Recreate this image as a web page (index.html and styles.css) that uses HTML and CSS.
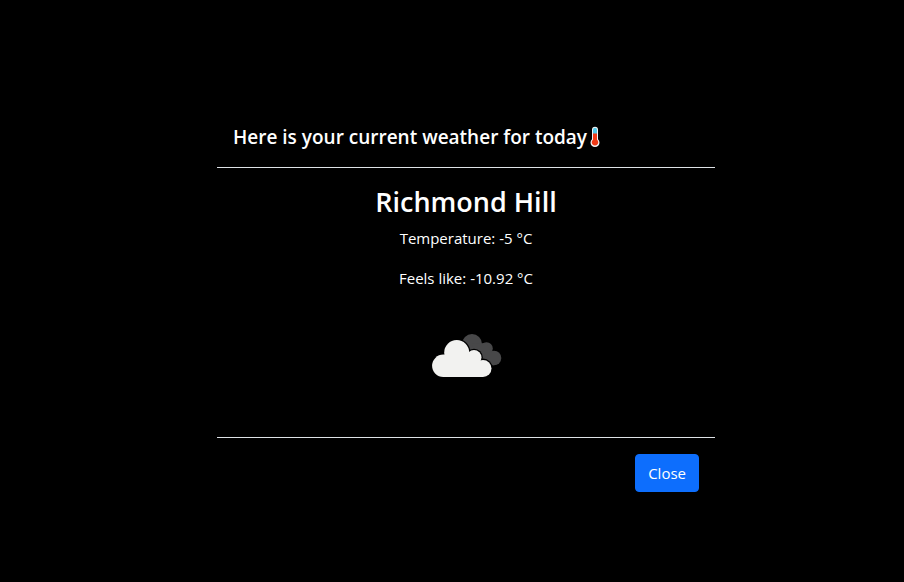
FILE: index.html
```html
<!DOCTYPE html>
<html lang="en">
<head>
<meta charset="utf-8">
<meta name="viewport" content="width=device-width, initial-scale=1">
<title>Current weather</title>
<link rel="stylesheet" href="styles.css">
</head>
<body>
<section class="modal" role="dialog" aria-labelledby="modal-title">
  <header class="modal-header">
    <h1 class="modal-title" id="modal-title">Here is your current weather for today</h1>
    <svg class="thermometer" viewBox="0 0 12 22" aria-hidden="true">
      <path d="M6 .8a3 3 0 0 0-3 3v9.400a4.500 4.500 0 1 0 6 0V3.800a3 3 0 0 0-3-3z" fill="#f4f4f4"/>
      <path d="M4 3.800a2 2 0 0 1 4 0V8H4z" fill="#50c8e8"/>
      <path d="M4 7.500h4v6.200a3.300 3.300 0 1 1-4 0z" fill="#f03a17"/>
    </svg>
  </header>
  <div class="modal-body">
    <h2 class="city">Richmond Hill</h2>
    <p class="reading">Temperature: -5 °C</p>
    <p class="reading">Feels like: -10.92 °C</p>
    <svg class="weather-icon" viewBox="0 0 100 100" role="img" aria-label="Broken clouds">
      <g fill="#484849">
        <circle cx="56" cy="38" r="10"/>
        <circle cx="70.500" cy="42.500" r="6.300"/>
        <circle cx="78" cy="52" r="7.300"/>
        <path d="M56 38l14-1 8 14v8.300H62z"/>
      </g>
      <g fill="#000">
        <circle cx="40.700" cy="46.500" r="13.700"/>
        <circle cx="58" cy="51.500" r="8.800"/>
        <circle cx="67" cy="62.300" r="9.700"/>
      </g>
      <g fill="#f2f2f0">
        <circle cx="27.300" cy="59.800" r="11.200"/>
        <circle cx="40.700" cy="46.500" r="12.500"/>
        <circle cx="58" cy="51.500" r="7.500"/>
        <circle cx="67" cy="62.500" r="8.500"/>
        <path d="M27 50h34l6 10v11H27z"/>
      </g>
    </svg>
  </div>
  <footer class="modal-footer">
    <button class="close-button" type="button">Close</button>
  </footer>
</section>
</body>
</html>
```
FILE: styles.css
```css
* { box-sizing: border-box; }
body {
  margin: 0;
  min-height: 100vh;
  padding: 107px 16px 0 44px;
  background: #000;
  color: #fff;
  font: 15px/24px "Open Sans", "Noto Sans", sans-serif;
}
.modal { max-width: 498px; margin: 0 auto; }
.modal-header {
  display: flex;
  align-items: center;
  gap: 2px;
  padding: 16px;
  border-bottom: 1px solid #dee2e6;
}
.modal-title { margin: 0; font-size: 19px; line-height: 28px; font-weight: 600; }
.thermometer { width: 12px; height: 22px; }
.modal-body { padding: 16px; text-align: center; }
.city { margin: 0 0 6px; font-size: 27px; line-height: 36px; font-weight: 600; }
.reading { margin: 0 0 16px; }
.weather-icon { display: block; width: 100px; height: 100px; margin: 0 auto 15px; }
.modal-footer {
  display: flex;
  justify-content: flex-end;
  padding: 16px;
  border-top: 1px solid #dee2e6;
}
.close-button {
  padding: 6px 12px;
  border: 1px solid #0d6efd;
  border-radius: 4px;
  background: #0d6efd;
  color: #fff;
  font: inherit;
}
```
